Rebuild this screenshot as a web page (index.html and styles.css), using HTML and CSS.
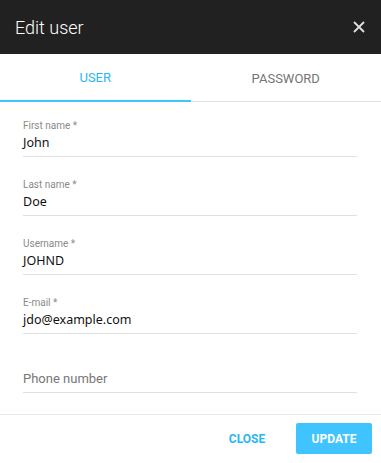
FILE: index.html
```html
<!DOCTYPE html>
<html>
<head>
<meta charset="utf-8">
<link rel="stylesheet" href="styles.css">
</head>
<body>
<div class="dialog">
  <header class="header">
    <h1 class="title">Edit user</h1>
    <svg class="close-icon" width="12" height="12" viewBox="0 0 12 12"><path d="M1 1L11 11M11 1L1 11" stroke="#e0e0e0" stroke-width="1.8" fill="none"/></svg>
  </header>
  <nav class="tabs">
    <div class="tab active">USER</div>
    <div class="tab">PASSWORD</div>
  </nav>
  <div class="form">
    <div class="field">
      <div class="label">First name *</div>
      <div class="value">John</div>
    </div>
    <div class="field">
      <div class="label">Last name *</div>
      <div class="value">Doe</div>
    </div>
    <div class="field">
      <div class="label">Username *</div>
      <div class="value">JOHND</div>
    </div>
    <div class="field">
      <div class="label">E-mail *</div>
      <div class="value">jdo@example.com</div>
    </div>
    <div class="field">
      <div class="label empty"></div>
      <div class="value placeholder">Phone number</div>
    </div>
  </div>
  <footer class="footer">
    <button class="btn btn-flat">CLOSE</button>
    <button class="btn btn-raised">UPDATE</button>
  </footer>
</div>
</body>
</html>
```
FILE: styles.css
```css
* { box-sizing: border-box; }
body {
  margin: 0;
  font-family: Roboto, "Noto Sans", sans-serif;
  background: #fff;
}
.dialog {
  width: 381px;
  height: 463px;
  display: flex;
  flex-direction: column;
}
.header {
  height: 54px;
  background: #212121;
  display: flex;
  align-items: center;
  justify-content: space-between;
  padding: 0 16px 0 15px;
}
.title {
  margin: 0;
  color: #fff;
  font-size: 18px;
  font-weight: 300;
}
.close-icon { display: block; }
.tabs {
  display: flex;
  height: 48px;
  border-bottom: 1px solid #e0e0e0;
}
.tab {
  flex: 1;
  display: flex;
  align-items: center;
  justify-content: center;
  font-size: 13px;
  font-weight: 400;
  color: #757575;
  padding-top: 1px;
}
.tab.active {
  color: #29b6f6;
  border-bottom: 2px solid #40c4ff;
  margin-bottom: -1px;
}
.form {
  padding: 17px 24px 0 23px;
  display: flex;
  flex-direction: column;
  gap: 21px;
  flex: 1;
}
.field {
  border-bottom: 1px solid #e0e0e0;
  height: 38px;
}
.label {
  font-size: 10px;
  color: #8a8a8a;
  height: 14px;
  line-height: 14px;
}
.value {
  font-family: "Noto Sans", "Open Sans", sans-serif;
  font-size: 12.5px;
  color: #111;
  line-height: 19px;
}
.placeholder {
  font-family: Roboto, sans-serif;
  font-size: 13px;
  color: #777;
}
.footer {
  height: 49px;
  border-top: 1px solid #e8e8e8;
  display: flex;
  align-items: center;
  justify-content: flex-end;
  padding: 0 9px 1px 0;
  gap: 12px;
}
.btn {
  font-family: Roboto, sans-serif;
  font-size: 12px;
  font-weight: 700;
  border: none;
  height: 31px;
  padding: 0;
  cursor: pointer;
}
.btn-flat {
  background: none;
  color: #29b6f6;
  width: 74px;
}
.btn-raised {
  background: #40c4ff;
  color: #fff;
  width: 76px;
  border-radius: 2px;
}
```
